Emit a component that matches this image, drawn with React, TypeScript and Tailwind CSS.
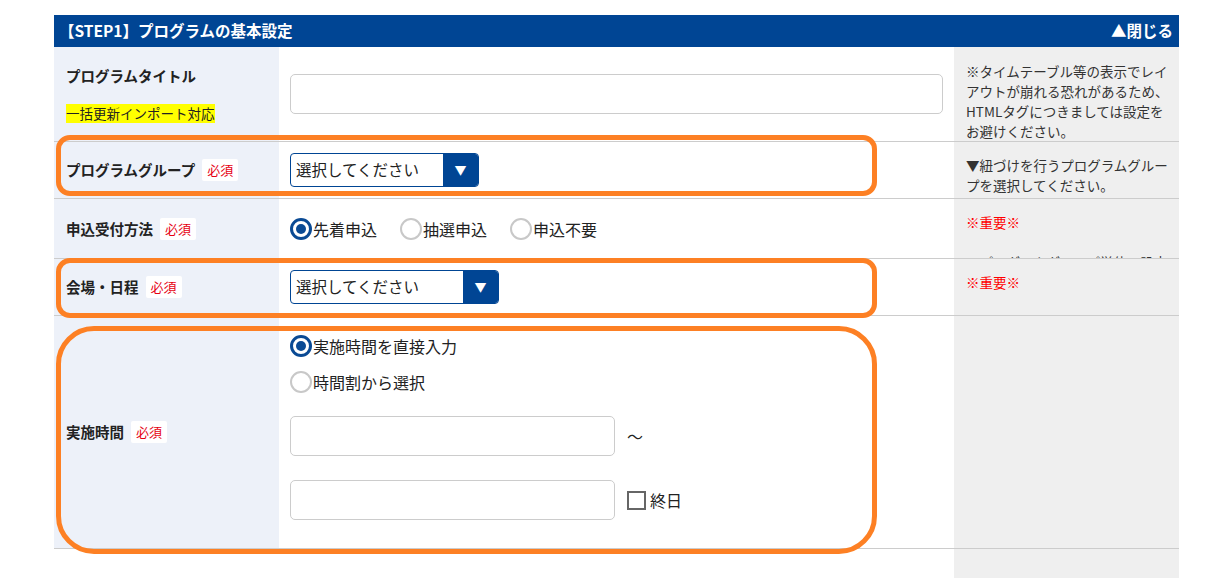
import React from "react";

function Badge() {
  return (
    <span className="ml-[7px] bg-white text-[#e60012] text-[13px] font-normal px-[5px] leading-[22px] rounded-[2px]">
      必須
    </span>
  );
}

function RadioOn() {
  return (
    <span className="w-[22px] h-[22px] rounded-full border-[3px] border-[#0a4a94] bg-white flex items-center justify-center shrink-0">
      <span className="w-[10px] h-[10px] rounded-full bg-[#0a4a94]" />
    </span>
  );
}

function RadioOff() {
  return <span className="w-[22px] h-[22px] rounded-full border-2 border-[#c8c8c8] bg-white shrink-0" />;
}

function Select({ width }: { width: string }) {
  return (
    <div className={`${width} h-[34px] flex border border-[#004594] rounded-[4px] overflow-hidden bg-white`}>
      <div className="flex-1 flex items-center pl-[5px] text-[15.5px] text-[#222]">選択してください</div>
      <div className="w-[35px] bg-[#004594] flex items-center justify-center text-white text-[12px]">▼</div>
    </div>
  );
}

export default function App() {
  const label = "flex items-center pl-3 bg-[#edf1f9] text-[14.5px] font-bold text-[#222]";
  const note = "bg-[#efefef] overflow-hidden px-3 pt-[13px] text-[13.5px] leading-[20px] text-[#333] whitespace-nowrap";
  const row = "grid grid-cols-[225px_675px_225px] border-b border-[#cccccc]";
  return (
    <div className="w-[1222px] h-[578px] overflow-hidden bg-white pt-[15px] pl-[54px] font-['Noto_Sans_CJK_JP','Noto_Sans',sans-serif]">
      <div className="relative w-[1125px]">
        <div className="h-[32px] bg-[#004594] flex items-center justify-between pl-[5px] pr-[6px] text-white text-[15.5px] font-bold">
          <span>【STEP1】プログラムの基本設定</span>
          <span>▲閉じる</span>
        </div>

        {/* Row 1 */}
        <div className={`${row} h-[95px]`}>
          <div className="flex flex-col justify-center items-start pl-3 bg-[#edf1f9] text-[#222]">
            <span className="text-[14.5px] font-bold leading-[20px]">プログラムタイトル</span>
            <span className="mt-[18px] bg-[#ffff00] text-[13.5px] leading-[19px]">一括更新インポート対応</span>
          </div>
          <div className="flex items-center px-[11px]">
            <div className="w-full h-[40px] border border-[#cccccc] rounded-[5px] bg-white" />
          </div>
          <div className={`${note} pt-[14px]`}>
            ※タイムテーブル等の表示でレイ
            <br />
            アウトが崩れる恐れがあるため、
            <br />
            HTMLタグにつきましては設定を
            <br />
            お避けください。
          </div>
        </div>

        {/* Row 2 */}
        <div className={`${row} h-[57px]`}>
          <div className={label}>
            プログラムグループ
            <Badge />
          </div>
          <div className="flex items-center pl-[11px]">
            <Select width="w-[189px]" />
          </div>
          <div className={note}>
            ▼紐づけを行うプログラムグルー
            <br />
            プを選択してください。
            <br />
            ※複数のグループを選択できます。
          </div>
        </div>

        {/* Row 3 */}
        <div className={`${row} h-[60px]`}>
          <div className={label}>
            申込受付方法
            <Badge />
          </div>
          <div className="flex items-center pl-[11px] text-[16px] text-[#222]">
            <RadioOn />
            <span className="ml-[1px]">先着申込</span>
            <span className="ml-[23px]" />
            <RadioOff />
            <span className="ml-[1px]">抽選申込</span>
            <span className="ml-[23px]" />
            <RadioOff />
            <span className="ml-[1px]">申込不要</span>
          </div>
          <div className={note}>
            <span className="text-[#ff0000]">※重要※</span>
            <br />
            <br />
            ※プログラムグループ単位で設定
          </div>
        </div>

        {/* Row 4 */}
        <div className={`${row} h-[57px]`}>
          <div className={label}>
            会場・日程
            <Badge />
          </div>
          <div className="flex items-center pl-[11px]">
            <Select width="w-[209px]" />
          </div>
          <div className={note}>
            <span className="text-[#ff0000]">※重要※</span>
            <br />
            <br />
            ※会場・日程を変更すると
          </div>
        </div>

        {/* Row 5 */}
        <div className={`${row} h-[233px]`}>
          <div className={label}>
            実施時間
            <Badge />
          </div>
          <div className="flex flex-col pl-[11px] pt-[18px] text-[16px] text-[#222]">
            <div className="h-[24px] flex items-center">
              <RadioOn />
              <span className="ml-[1px]">実施時間を直接入力</span>
            </div>
            <div className="mt-[12px] h-[24px] flex items-center">
              <RadioOff />
              <span className="ml-[1px]">時間割から選択</span>
            </div>
            <div className="mt-[22px] flex items-center">
              <div className="w-[325px] h-[40px] border border-[#cccccc] rounded-[5px] bg-white" />
              <span className="ml-[12px]">〜</span>
            </div>
            <div className="mt-[24px] flex items-center">
              <div className="w-[325px] h-[40px] border border-[#cccccc] rounded-[5px] bg-white" />
              <span className="ml-[12px] w-[19px] h-[19px] border-[2.5px] border-[#666666] bg-white" />
              <span className="ml-[4px]">終日</span>
            </div>
          </div>
          <div className={note} />
        </div>

        {/* Next row (partially visible) */}
        <div className="grid grid-cols-[225px_675px_225px] h-[40px]">
          <div className="bg-white" />
          <div className="bg-white" />
          <div className="bg-[#efefef]" />
        </div>

        {/* Orange highlight overlays */}
        <div className="absolute left-[2px] top-[120px] w-[821px] h-[61px] rounded-[14px] border-[5px] border-[#fd8024] pointer-events-none" />
        <div className="absolute left-[2px] top-[243px] w-[821px] h-[60px] rounded-[14px] border-[5px] border-[#fd8024] pointer-events-none" />
        <div className="absolute left-[2px] top-[311px] w-[821px] h-[228px] rounded-[38px] border-[5px] border-[#fd8024] pointer-events-none" />
      </div>
    </div>
  );
}
